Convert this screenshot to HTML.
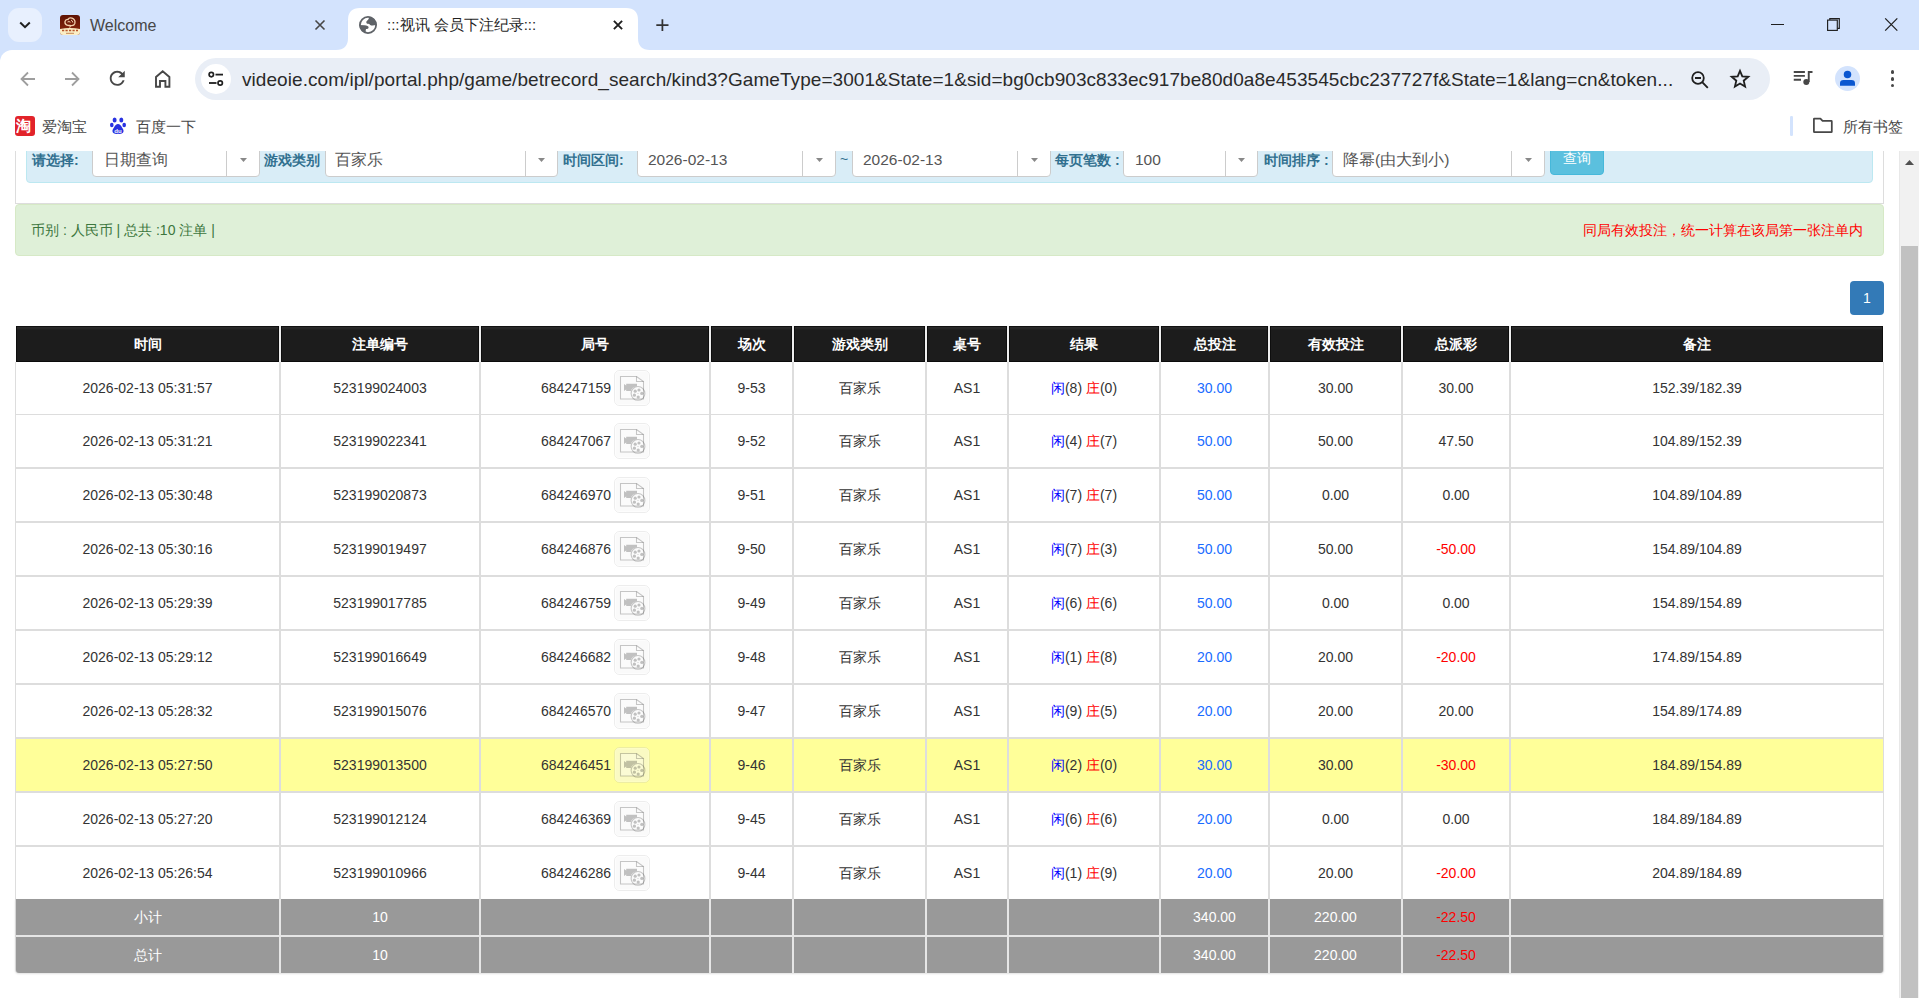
<!DOCTYPE html>
<html><head><meta charset="utf-8"><title>:::视讯 会员下注纪录:::</title><style>
*{margin:0;padding:0;box-sizing:border-box}
html,body{width:1919px;height:998px;overflow:hidden;background:#fff;font-family:"Liberation Sans", sans-serif;position:relative}
.a{position:absolute}
.t{position:absolute;white-space:nowrap;line-height:1}
svg{position:absolute;overflow:visible}
</style></head>
<body>
<div class="a" style="left:0;top:151px;width:1919px;height:847px;overflow:hidden;background:#fff">
<div class="a" style="left:0;top:-151px;width:1919px;height:998px"><div class="a" style="left:15px;top:140px;width:1869px;height:64px;border:1px solid #ddd;border-top:none"></div><div class="a" style="left:26px;top:130px;width:1847px;height:53px;background:#d9edf7;border:1px solid #bce8f1;border-radius:4px"></div><div class="t" style="left:32px;top:153px;font-size:14px;font-weight:bold;color:#31708f">请选择:</div><div class="a" style="left:92px;top:130px;width:168px;height:47px;background:#fff;border:1px solid #ccc;border-radius:4px"></div><div class="a" style="left:226px;top:140px;width:1px;height:36px;background:#ccc"></div><svg style="left:239.5px;top:158px" width="7" height="4" viewBox="0 0 7 4"><path d="M0 0 H7 L3.5 4 Z" fill="#888"/></svg><div class="t" style="left:104px;top:151.5px;font-size:15.5px;color:#555">日期查询</div><div class="t" style="left:264px;top:153px;font-size:14px;font-weight:bold;color:#31708f">游戏类别</div><div class="a" style="left:325px;top:130px;width:233px;height:47px;background:#fff;border:1px solid #ccc;border-radius:4px"></div><div class="a" style="left:525px;top:140px;width:1px;height:36px;background:#ccc"></div><svg style="left:538.0px;top:158px" width="7" height="4" viewBox="0 0 7 4"><path d="M0 0 H7 L3.5 4 Z" fill="#888"/></svg><div class="t" style="left:335px;top:151.5px;font-size:15.5px;color:#555">百家乐</div><div class="t" style="left:563px;top:153px;font-size:14px;font-weight:bold;color:#31708f">时间区间:</div><div class="a" style="left:637px;top:130px;width:199px;height:47px;background:#fff;border:1px solid #ccc;border-radius:4px"></div><div class="a" style="left:802px;top:140px;width:1px;height:36px;background:#ccc"></div><svg style="left:815.5px;top:158px" width="7" height="4" viewBox="0 0 7 4"><path d="M0 0 H7 L3.5 4 Z" fill="#888"/></svg><div class="t" style="left:648px;top:151.5px;font-size:15.5px;color:#555">2026-02-13</div><div class="t" style="left:840px;top:152px;font-size:14px;color:#31708f">~</div><div class="a" style="left:852px;top:130px;width:199px;height:47px;background:#fff;border:1px solid #ccc;border-radius:4px"></div><div class="a" style="left:1017px;top:140px;width:1px;height:36px;background:#ccc"></div><svg style="left:1030.5px;top:158px" width="7" height="4" viewBox="0 0 7 4"><path d="M0 0 H7 L3.5 4 Z" fill="#888"/></svg><div class="t" style="left:863px;top:151.5px;font-size:15.5px;color:#555">2026-02-13</div><div class="t" style="left:1055px;top:153px;font-size:14px;font-weight:bold;color:#31708f">每页笔数 :</div><div class="a" style="left:1123px;top:130px;width:135px;height:47px;background:#fff;border:1px solid #ccc;border-radius:4px"></div><div class="a" style="left:1225px;top:140px;width:1px;height:36px;background:#ccc"></div><svg style="left:1238.0px;top:158px" width="7" height="4" viewBox="0 0 7 4"><path d="M0 0 H7 L3.5 4 Z" fill="#888"/></svg><div class="t" style="left:1135px;top:151.5px;font-size:15.5px;color:#555">100</div><div class="t" style="left:1264px;top:153px;font-size:14px;font-weight:bold;color:#31708f">时间排序 :</div><div class="a" style="left:1332px;top:130px;width:213px;height:47px;background:#fff;border:1px solid #ccc;border-radius:4px"></div><div class="a" style="left:1511px;top:140px;width:1px;height:36px;background:#ccc"></div><svg style="left:1524.5px;top:158px" width="7" height="4" viewBox="0 0 7 4"><path d="M0 0 H7 L3.5 4 Z" fill="#888"/></svg><div class="t" style="left:1343px;top:151.5px;font-size:15.5px;color:#555">降幂(由大到小)</div><div class="a" style="left:1550px;top:130px;width:54px;height:45px;background:#5bc0de;border:1px solid #46b8da;border-radius:4px"></div><div class="t" style="left:1563px;top:151px;font-size:14px;color:#fff">查询</div><div class="a" style="left:15px;top:204px;width:1869px;height:52px;background:#dff0d8;border:1px solid #d6e9c6;border-radius:4px"></div><div class="t" style="left:31px;top:223px;font-size:14px;color:#3c763d">币别 : 人民币 | 总共 :10 注单 |</div><div class="t" style="left:1583px;top:223px;font-size:14px;color:#ff0000">同局有效投注，统一计算在该局第一张注单内</div><div class="a" style="left:1850px;top:281px;width:34px;height:34px;background:#337ab7;border-radius:4px"></div><div class="t" style="left:1850px;top:291px;width:34px;text-align:center;font-size:14px;color:#fff">1</div><div class="a" style="left:16px;top:326px;width:263px;height:36px;background:linear-gradient(#121212 0,#121212 1px,#2a2a2a 1px,#262626 3px,#1c1c1c 4px,#1c1c1c 35px,#0b0b0b 35px);box-shadow:inset 1px 0 0 #0e0e0e,inset -1px 0 0 #0e0e0e"></div><div class="t" style="left:16px;top:337px;width:263px;text-align:center;font-size:14px;font-weight:bold;color:#fff">时间</div><div class="a" style="left:281px;top:326px;width:198px;height:36px;background:linear-gradient(#121212 0,#121212 1px,#2a2a2a 1px,#262626 3px,#1c1c1c 4px,#1c1c1c 35px,#0b0b0b 35px);box-shadow:inset 1px 0 0 #0e0e0e,inset -1px 0 0 #0e0e0e"></div><div class="t" style="left:281px;top:337px;width:198px;text-align:center;font-size:14px;font-weight:bold;color:#fff">注单编号</div><div class="a" style="left:481px;top:326px;width:228px;height:36px;background:linear-gradient(#121212 0,#121212 1px,#2a2a2a 1px,#262626 3px,#1c1c1c 4px,#1c1c1c 35px,#0b0b0b 35px);box-shadow:inset 1px 0 0 #0e0e0e,inset -1px 0 0 #0e0e0e"></div><div class="t" style="left:481px;top:337px;width:228px;text-align:center;font-size:14px;font-weight:bold;color:#fff">局号</div><div class="a" style="left:711px;top:326px;width:81px;height:36px;background:linear-gradient(#121212 0,#121212 1px,#2a2a2a 1px,#262626 3px,#1c1c1c 4px,#1c1c1c 35px,#0b0b0b 35px);box-shadow:inset 1px 0 0 #0e0e0e,inset -1px 0 0 #0e0e0e"></div><div class="t" style="left:711px;top:337px;width:81px;text-align:center;font-size:14px;font-weight:bold;color:#fff">场次</div><div class="a" style="left:794px;top:326px;width:131px;height:36px;background:linear-gradient(#121212 0,#121212 1px,#2a2a2a 1px,#262626 3px,#1c1c1c 4px,#1c1c1c 35px,#0b0b0b 35px);box-shadow:inset 1px 0 0 #0e0e0e,inset -1px 0 0 #0e0e0e"></div><div class="t" style="left:794px;top:337px;width:131px;text-align:center;font-size:14px;font-weight:bold;color:#fff">游戏类别</div><div class="a" style="left:927px;top:326px;width:80px;height:36px;background:linear-gradient(#121212 0,#121212 1px,#2a2a2a 1px,#262626 3px,#1c1c1c 4px,#1c1c1c 35px,#0b0b0b 35px);box-shadow:inset 1px 0 0 #0e0e0e,inset -1px 0 0 #0e0e0e"></div><div class="t" style="left:927px;top:337px;width:80px;text-align:center;font-size:14px;font-weight:bold;color:#fff">桌号</div><div class="a" style="left:1009px;top:326px;width:150px;height:36px;background:linear-gradient(#121212 0,#121212 1px,#2a2a2a 1px,#262626 3px,#1c1c1c 4px,#1c1c1c 35px,#0b0b0b 35px);box-shadow:inset 1px 0 0 #0e0e0e,inset -1px 0 0 #0e0e0e"></div><div class="t" style="left:1009px;top:337px;width:150px;text-align:center;font-size:14px;font-weight:bold;color:#fff">结果</div><div class="a" style="left:1161px;top:326px;width:107px;height:36px;background:linear-gradient(#121212 0,#121212 1px,#2a2a2a 1px,#262626 3px,#1c1c1c 4px,#1c1c1c 35px,#0b0b0b 35px);box-shadow:inset 1px 0 0 #0e0e0e,inset -1px 0 0 #0e0e0e"></div><div class="t" style="left:1161px;top:337px;width:107px;text-align:center;font-size:14px;font-weight:bold;color:#fff">总投注</div><div class="a" style="left:1270px;top:326px;width:131px;height:36px;background:linear-gradient(#121212 0,#121212 1px,#2a2a2a 1px,#262626 3px,#1c1c1c 4px,#1c1c1c 35px,#0b0b0b 35px);box-shadow:inset 1px 0 0 #0e0e0e,inset -1px 0 0 #0e0e0e"></div><div class="t" style="left:1270px;top:337px;width:131px;text-align:center;font-size:14px;font-weight:bold;color:#fff">有效投注</div><div class="a" style="left:1403px;top:326px;width:106px;height:36px;background:linear-gradient(#121212 0,#121212 1px,#2a2a2a 1px,#262626 3px,#1c1c1c 4px,#1c1c1c 35px,#0b0b0b 35px);box-shadow:inset 1px 0 0 #0e0e0e,inset -1px 0 0 #0e0e0e"></div><div class="t" style="left:1403px;top:337px;width:106px;text-align:center;font-size:14px;font-weight:bold;color:#fff">总派彩</div><div class="a" style="left:1511px;top:326px;width:372px;height:36px;background:linear-gradient(#121212 0,#121212 1px,#2a2a2a 1px,#262626 3px,#1c1c1c 4px,#1c1c1c 35px,#0b0b0b 35px);box-shadow:inset 1px 0 0 #0e0e0e,inset -1px 0 0 #0e0e0e"></div><div class="t" style="left:1511px;top:337px;width:372px;text-align:center;font-size:14px;font-weight:bold;color:#fff">备注</div><div class="a" style="left:279px;top:326px;width:2px;height:36px;background:#eeeeee"></div><div class="a" style="left:479px;top:326px;width:2px;height:36px;background:#eeeeee"></div><div class="a" style="left:709px;top:326px;width:2px;height:36px;background:#eeeeee"></div><div class="a" style="left:792px;top:326px;width:2px;height:36px;background:#eeeeee"></div><div class="a" style="left:925px;top:326px;width:2px;height:36px;background:#eeeeee"></div><div class="a" style="left:1007px;top:326px;width:2px;height:36px;background:#eeeeee"></div><div class="a" style="left:1159px;top:326px;width:2px;height:36px;background:#eeeeee"></div><div class="a" style="left:1268px;top:326px;width:2px;height:36px;background:#eeeeee"></div><div class="a" style="left:1401px;top:326px;width:2px;height:36px;background:#eeeeee"></div><div class="a" style="left:1509px;top:326px;width:2px;height:36px;background:#eeeeee"></div><div class="a" style="left:15px;top:362px;width:1869px;height:537px;background:#fff;border-left:1px solid #ddd;border-right:1px solid #ddd"></div><div class="a" style="left:15px;top:414px;width:1869px;height:1px;background:#ddd"></div><div class="t" style="left:16px;top:381px;width:263px;text-align:center;font-size:14px;color:#333">2026-02-13 05:31:57</div><div class="t" style="left:281px;top:381px;width:198px;text-align:center;font-size:14px;color:#333">523199024003</div><div class="t" style="left:481px;top:381px;width:228px;text-align:center;font-size:14px;color:#333">684247159<span style="display:inline-block;width:38px"></span></div><div class="a" style="left:614px;top:370px;width:36px;height:36px"><svg width="36" height="36" viewBox="0 0 36 36" style="position:static;display:block"><defs><mask id="cm"><rect width="36" height="36" fill="#fff"/><circle cx="24" cy="23.4" r="7.5" fill="#000"/></mask></defs><rect x="0.5" y="0.5" width="35" height="35" rx="5" fill="rgba(255,255,255,0.45)" stroke="rgba(0,0,0,0.07)"/><rect x="1.5" y="1.5" width="33" height="33" rx="4" fill="rgba(0,0,0,0.02)"/><path d="M6.5 6.5 H22.5 L29.5 11.5 V29 H6.5 Z" fill="rgba(255,255,255,0.3)" stroke="rgba(0,0,0,0.21)" stroke-width="1.1"/><path d="M22.5 6.5 V11.5 H29.5" fill="none" stroke="rgba(0,0,0,0.21)" stroke-width="1.1"/><path d="M10 14 L12.2 15.6 V13.8 H23 V21 H12.2 V19.4 L10 21 Z" fill="rgba(0,0,0,0.23)" mask="url(#cm)"/><circle cx="24" cy="23.4" r="6.9" fill="none" stroke="rgba(0,0,0,0.21)" stroke-width="1.1"/><g fill="rgba(0,0,0,0.23)"><circle cx="21.2" cy="21.2" r="1.6"/><circle cx="25" cy="20" r="1.6"/><circle cx="27.8" cy="23.4" r="1.6"/><circle cx="20.4" cy="25.2" r="1.6"/><circle cx="24.2" cy="27" r="1.6"/><circle cx="24" cy="23.4" r="0.5"/></g></svg></div><div class="t" style="left:711px;top:381px;width:81px;text-align:center;font-size:14px;color:#333">9-53</div><div class="t" style="left:794px;top:381px;width:131px;text-align:center;font-size:14px;color:#333">百家乐</div><div class="t" style="left:927px;top:381px;width:80px;text-align:center;font-size:14px;color:#333">AS1</div><div class="t" style="left:1009px;top:381px;width:150px;text-align:center;font-size:14px;color:#333"><span style="color:#0000ff">闲</span>(8) <span style="color:#ff0000">庄</span>(0)</div><div class="t" style="left:1161px;top:381px;width:107px;text-align:center;font-size:14px;color:#1a6cff">30.00</div><div class="t" style="left:1270px;top:381px;width:131px;text-align:center;font-size:14px;color:#333">30.00</div><div class="t" style="left:1403px;top:381px;width:106px;text-align:center;font-size:14px;color:#333">30.00</div><div class="t" style="left:1511px;top:381px;width:372px;text-align:center;font-size:14px;color:#333">152.39/182.39</div><div class="a" style="left:15px;top:467px;width:1869px;height:2px;background:#ddd"></div><div class="t" style="left:16px;top:434px;width:263px;text-align:center;font-size:14px;color:#333">2026-02-13 05:31:21</div><div class="t" style="left:281px;top:434px;width:198px;text-align:center;font-size:14px;color:#333">523199022341</div><div class="t" style="left:481px;top:434px;width:228px;text-align:center;font-size:14px;color:#333">684247067<span style="display:inline-block;width:38px"></span></div><div class="a" style="left:614px;top:423px;width:36px;height:36px"><svg width="36" height="36" viewBox="0 0 36 36" style="position:static;display:block"><defs><mask id="cm"><rect width="36" height="36" fill="#fff"/><circle cx="24" cy="23.4" r="7.5" fill="#000"/></mask></defs><rect x="0.5" y="0.5" width="35" height="35" rx="5" fill="rgba(255,255,255,0.45)" stroke="rgba(0,0,0,0.07)"/><rect x="1.5" y="1.5" width="33" height="33" rx="4" fill="rgba(0,0,0,0.02)"/><path d="M6.5 6.5 H22.5 L29.5 11.5 V29 H6.5 Z" fill="rgba(255,255,255,0.3)" stroke="rgba(0,0,0,0.21)" stroke-width="1.1"/><path d="M22.5 6.5 V11.5 H29.5" fill="none" stroke="rgba(0,0,0,0.21)" stroke-width="1.1"/><path d="M10 14 L12.2 15.6 V13.8 H23 V21 H12.2 V19.4 L10 21 Z" fill="rgba(0,0,0,0.23)" mask="url(#cm)"/><circle cx="24" cy="23.4" r="6.9" fill="none" stroke="rgba(0,0,0,0.21)" stroke-width="1.1"/><g fill="rgba(0,0,0,0.23)"><circle cx="21.2" cy="21.2" r="1.6"/><circle cx="25" cy="20" r="1.6"/><circle cx="27.8" cy="23.4" r="1.6"/><circle cx="20.4" cy="25.2" r="1.6"/><circle cx="24.2" cy="27" r="1.6"/><circle cx="24" cy="23.4" r="0.5"/></g></svg></div><div class="t" style="left:711px;top:434px;width:81px;text-align:center;font-size:14px;color:#333">9-52</div><div class="t" style="left:794px;top:434px;width:131px;text-align:center;font-size:14px;color:#333">百家乐</div><div class="t" style="left:927px;top:434px;width:80px;text-align:center;font-size:14px;color:#333">AS1</div><div class="t" style="left:1009px;top:434px;width:150px;text-align:center;font-size:14px;color:#333"><span style="color:#0000ff">闲</span>(4) <span style="color:#ff0000">庄</span>(7)</div><div class="t" style="left:1161px;top:434px;width:107px;text-align:center;font-size:14px;color:#1a6cff">50.00</div><div class="t" style="left:1270px;top:434px;width:131px;text-align:center;font-size:14px;color:#333">50.00</div><div class="t" style="left:1403px;top:434px;width:106px;text-align:center;font-size:14px;color:#333">47.50</div><div class="t" style="left:1511px;top:434px;width:372px;text-align:center;font-size:14px;color:#333">104.89/152.39</div><div class="a" style="left:15px;top:521px;width:1869px;height:2px;background:#ddd"></div><div class="t" style="left:16px;top:488px;width:263px;text-align:center;font-size:14px;color:#333">2026-02-13 05:30:48</div><div class="t" style="left:281px;top:488px;width:198px;text-align:center;font-size:14px;color:#333">523199020873</div><div class="t" style="left:481px;top:488px;width:228px;text-align:center;font-size:14px;color:#333">684246970<span style="display:inline-block;width:38px"></span></div><div class="a" style="left:614px;top:477px;width:36px;height:36px"><svg width="36" height="36" viewBox="0 0 36 36" style="position:static;display:block"><defs><mask id="cm"><rect width="36" height="36" fill="#fff"/><circle cx="24" cy="23.4" r="7.5" fill="#000"/></mask></defs><rect x="0.5" y="0.5" width="35" height="35" rx="5" fill="rgba(255,255,255,0.45)" stroke="rgba(0,0,0,0.07)"/><rect x="1.5" y="1.5" width="33" height="33" rx="4" fill="rgba(0,0,0,0.02)"/><path d="M6.5 6.5 H22.5 L29.5 11.5 V29 H6.5 Z" fill="rgba(255,255,255,0.3)" stroke="rgba(0,0,0,0.21)" stroke-width="1.1"/><path d="M22.5 6.5 V11.5 H29.5" fill="none" stroke="rgba(0,0,0,0.21)" stroke-width="1.1"/><path d="M10 14 L12.2 15.6 V13.8 H23 V21 H12.2 V19.4 L10 21 Z" fill="rgba(0,0,0,0.23)" mask="url(#cm)"/><circle cx="24" cy="23.4" r="6.9" fill="none" stroke="rgba(0,0,0,0.21)" stroke-width="1.1"/><g fill="rgba(0,0,0,0.23)"><circle cx="21.2" cy="21.2" r="1.6"/><circle cx="25" cy="20" r="1.6"/><circle cx="27.8" cy="23.4" r="1.6"/><circle cx="20.4" cy="25.2" r="1.6"/><circle cx="24.2" cy="27" r="1.6"/><circle cx="24" cy="23.4" r="0.5"/></g></svg></div><div class="t" style="left:711px;top:488px;width:81px;text-align:center;font-size:14px;color:#333">9-51</div><div class="t" style="left:794px;top:488px;width:131px;text-align:center;font-size:14px;color:#333">百家乐</div><div class="t" style="left:927px;top:488px;width:80px;text-align:center;font-size:14px;color:#333">AS1</div><div class="t" style="left:1009px;top:488px;width:150px;text-align:center;font-size:14px;color:#333"><span style="color:#0000ff">闲</span>(7) <span style="color:#ff0000">庄</span>(7)</div><div class="t" style="left:1161px;top:488px;width:107px;text-align:center;font-size:14px;color:#1a6cff">50.00</div><div class="t" style="left:1270px;top:488px;width:131px;text-align:center;font-size:14px;color:#333">0.00</div><div class="t" style="left:1403px;top:488px;width:106px;text-align:center;font-size:14px;color:#333">0.00</div><div class="t" style="left:1511px;top:488px;width:372px;text-align:center;font-size:14px;color:#333">104.89/104.89</div><div class="a" style="left:15px;top:575px;width:1869px;height:2px;background:#ddd"></div><div class="t" style="left:16px;top:542px;width:263px;text-align:center;font-size:14px;color:#333">2026-02-13 05:30:16</div><div class="t" style="left:281px;top:542px;width:198px;text-align:center;font-size:14px;color:#333">523199019497</div><div class="t" style="left:481px;top:542px;width:228px;text-align:center;font-size:14px;color:#333">684246876<span style="display:inline-block;width:38px"></span></div><div class="a" style="left:614px;top:531px;width:36px;height:36px"><svg width="36" height="36" viewBox="0 0 36 36" style="position:static;display:block"><defs><mask id="cm"><rect width="36" height="36" fill="#fff"/><circle cx="24" cy="23.4" r="7.5" fill="#000"/></mask></defs><rect x="0.5" y="0.5" width="35" height="35" rx="5" fill="rgba(255,255,255,0.45)" stroke="rgba(0,0,0,0.07)"/><rect x="1.5" y="1.5" width="33" height="33" rx="4" fill="rgba(0,0,0,0.02)"/><path d="M6.5 6.5 H22.5 L29.5 11.5 V29 H6.5 Z" fill="rgba(255,255,255,0.3)" stroke="rgba(0,0,0,0.21)" stroke-width="1.1"/><path d="M22.5 6.5 V11.5 H29.5" fill="none" stroke="rgba(0,0,0,0.21)" stroke-width="1.1"/><path d="M10 14 L12.2 15.6 V13.8 H23 V21 H12.2 V19.4 L10 21 Z" fill="rgba(0,0,0,0.23)" mask="url(#cm)"/><circle cx="24" cy="23.4" r="6.9" fill="none" stroke="rgba(0,0,0,0.21)" stroke-width="1.1"/><g fill="rgba(0,0,0,0.23)"><circle cx="21.2" cy="21.2" r="1.6"/><circle cx="25" cy="20" r="1.6"/><circle cx="27.8" cy="23.4" r="1.6"/><circle cx="20.4" cy="25.2" r="1.6"/><circle cx="24.2" cy="27" r="1.6"/><circle cx="24" cy="23.4" r="0.5"/></g></svg></div><div class="t" style="left:711px;top:542px;width:81px;text-align:center;font-size:14px;color:#333">9-50</div><div class="t" style="left:794px;top:542px;width:131px;text-align:center;font-size:14px;color:#333">百家乐</div><div class="t" style="left:927px;top:542px;width:80px;text-align:center;font-size:14px;color:#333">AS1</div><div class="t" style="left:1009px;top:542px;width:150px;text-align:center;font-size:14px;color:#333"><span style="color:#0000ff">闲</span>(7) <span style="color:#ff0000">庄</span>(3)</div><div class="t" style="left:1161px;top:542px;width:107px;text-align:center;font-size:14px;color:#1a6cff">50.00</div><div class="t" style="left:1270px;top:542px;width:131px;text-align:center;font-size:14px;color:#333">50.00</div><div class="t" style="left:1403px;top:542px;width:106px;text-align:center;font-size:14px;color:#ff0000">-50.00</div><div class="t" style="left:1511px;top:542px;width:372px;text-align:center;font-size:14px;color:#333">154.89/104.89</div><div class="a" style="left:15px;top:629px;width:1869px;height:2px;background:#ddd"></div><div class="t" style="left:16px;top:596px;width:263px;text-align:center;font-size:14px;color:#333">2026-02-13 05:29:39</div><div class="t" style="left:281px;top:596px;width:198px;text-align:center;font-size:14px;color:#333">523199017785</div><div class="t" style="left:481px;top:596px;width:228px;text-align:center;font-size:14px;color:#333">684246759<span style="display:inline-block;width:38px"></span></div><div class="a" style="left:614px;top:585px;width:36px;height:36px"><svg width="36" height="36" viewBox="0 0 36 36" style="position:static;display:block"><defs><mask id="cm"><rect width="36" height="36" fill="#fff"/><circle cx="24" cy="23.4" r="7.5" fill="#000"/></mask></defs><rect x="0.5" y="0.5" width="35" height="35" rx="5" fill="rgba(255,255,255,0.45)" stroke="rgba(0,0,0,0.07)"/><rect x="1.5" y="1.5" width="33" height="33" rx="4" fill="rgba(0,0,0,0.02)"/><path d="M6.5 6.5 H22.5 L29.5 11.5 V29 H6.5 Z" fill="rgba(255,255,255,0.3)" stroke="rgba(0,0,0,0.21)" stroke-width="1.1"/><path d="M22.5 6.5 V11.5 H29.5" fill="none" stroke="rgba(0,0,0,0.21)" stroke-width="1.1"/><path d="M10 14 L12.2 15.6 V13.8 H23 V21 H12.2 V19.4 L10 21 Z" fill="rgba(0,0,0,0.23)" mask="url(#cm)"/><circle cx="24" cy="23.4" r="6.9" fill="none" stroke="rgba(0,0,0,0.21)" stroke-width="1.1"/><g fill="rgba(0,0,0,0.23)"><circle cx="21.2" cy="21.2" r="1.6"/><circle cx="25" cy="20" r="1.6"/><circle cx="27.8" cy="23.4" r="1.6"/><circle cx="20.4" cy="25.2" r="1.6"/><circle cx="24.2" cy="27" r="1.6"/><circle cx="24" cy="23.4" r="0.5"/></g></svg></div><div class="t" style="left:711px;top:596px;width:81px;text-align:center;font-size:14px;color:#333">9-49</div><div class="t" style="left:794px;top:596px;width:131px;text-align:center;font-size:14px;color:#333">百家乐</div><div class="t" style="left:927px;top:596px;width:80px;text-align:center;font-size:14px;color:#333">AS1</div><div class="t" style="left:1009px;top:596px;width:150px;text-align:center;font-size:14px;color:#333"><span style="color:#0000ff">闲</span>(6) <span style="color:#ff0000">庄</span>(6)</div><div class="t" style="left:1161px;top:596px;width:107px;text-align:center;font-size:14px;color:#1a6cff">50.00</div><div class="t" style="left:1270px;top:596px;width:131px;text-align:center;font-size:14px;color:#333">0.00</div><div class="t" style="left:1403px;top:596px;width:106px;text-align:center;font-size:14px;color:#333">0.00</div><div class="t" style="left:1511px;top:596px;width:372px;text-align:center;font-size:14px;color:#333">154.89/154.89</div><div class="a" style="left:15px;top:683px;width:1869px;height:2px;background:#ddd"></div><div class="t" style="left:16px;top:650px;width:263px;text-align:center;font-size:14px;color:#333">2026-02-13 05:29:12</div><div class="t" style="left:281px;top:650px;width:198px;text-align:center;font-size:14px;color:#333">523199016649</div><div class="t" style="left:481px;top:650px;width:228px;text-align:center;font-size:14px;color:#333">684246682<span style="display:inline-block;width:38px"></span></div><div class="a" style="left:614px;top:639px;width:36px;height:36px"><svg width="36" height="36" viewBox="0 0 36 36" style="position:static;display:block"><defs><mask id="cm"><rect width="36" height="36" fill="#fff"/><circle cx="24" cy="23.4" r="7.5" fill="#000"/></mask></defs><rect x="0.5" y="0.5" width="35" height="35" rx="5" fill="rgba(255,255,255,0.45)" stroke="rgba(0,0,0,0.07)"/><rect x="1.5" y="1.5" width="33" height="33" rx="4" fill="rgba(0,0,0,0.02)"/><path d="M6.5 6.5 H22.5 L29.5 11.5 V29 H6.5 Z" fill="rgba(255,255,255,0.3)" stroke="rgba(0,0,0,0.21)" stroke-width="1.1"/><path d="M22.5 6.5 V11.5 H29.5" fill="none" stroke="rgba(0,0,0,0.21)" stroke-width="1.1"/><path d="M10 14 L12.2 15.6 V13.8 H23 V21 H12.2 V19.4 L10 21 Z" fill="rgba(0,0,0,0.23)" mask="url(#cm)"/><circle cx="24" cy="23.4" r="6.9" fill="none" stroke="rgba(0,0,0,0.21)" stroke-width="1.1"/><g fill="rgba(0,0,0,0.23)"><circle cx="21.2" cy="21.2" r="1.6"/><circle cx="25" cy="20" r="1.6"/><circle cx="27.8" cy="23.4" r="1.6"/><circle cx="20.4" cy="25.2" r="1.6"/><circle cx="24.2" cy="27" r="1.6"/><circle cx="24" cy="23.4" r="0.5"/></g></svg></div><div class="t" style="left:711px;top:650px;width:81px;text-align:center;font-size:14px;color:#333">9-48</div><div class="t" style="left:794px;top:650px;width:131px;text-align:center;font-size:14px;color:#333">百家乐</div><div class="t" style="left:927px;top:650px;width:80px;text-align:center;font-size:14px;color:#333">AS1</div><div class="t" style="left:1009px;top:650px;width:150px;text-align:center;font-size:14px;color:#333"><span style="color:#0000ff">闲</span>(1) <span style="color:#ff0000">庄</span>(8)</div><div class="t" style="left:1161px;top:650px;width:107px;text-align:center;font-size:14px;color:#1a6cff">20.00</div><div class="t" style="left:1270px;top:650px;width:131px;text-align:center;font-size:14px;color:#333">20.00</div><div class="t" style="left:1403px;top:650px;width:106px;text-align:center;font-size:14px;color:#ff0000">-20.00</div><div class="t" style="left:1511px;top:650px;width:372px;text-align:center;font-size:14px;color:#333">174.89/154.89</div><div class="a" style="left:15px;top:737px;width:1869px;height:2px;background:#ddd"></div><div class="t" style="left:16px;top:704px;width:263px;text-align:center;font-size:14px;color:#333">2026-02-13 05:28:32</div><div class="t" style="left:281px;top:704px;width:198px;text-align:center;font-size:14px;color:#333">523199015076</div><div class="t" style="left:481px;top:704px;width:228px;text-align:center;font-size:14px;color:#333">684246570<span style="display:inline-block;width:38px"></span></div><div class="a" style="left:614px;top:693px;width:36px;height:36px"><svg width="36" height="36" viewBox="0 0 36 36" style="position:static;display:block"><defs><mask id="cm"><rect width="36" height="36" fill="#fff"/><circle cx="24" cy="23.4" r="7.5" fill="#000"/></mask></defs><rect x="0.5" y="0.5" width="35" height="35" rx="5" fill="rgba(255,255,255,0.45)" stroke="rgba(0,0,0,0.07)"/><rect x="1.5" y="1.5" width="33" height="33" rx="4" fill="rgba(0,0,0,0.02)"/><path d="M6.5 6.5 H22.5 L29.5 11.5 V29 H6.5 Z" fill="rgba(255,255,255,0.3)" stroke="rgba(0,0,0,0.21)" stroke-width="1.1"/><path d="M22.5 6.5 V11.5 H29.5" fill="none" stroke="rgba(0,0,0,0.21)" stroke-width="1.1"/><path d="M10 14 L12.2 15.6 V13.8 H23 V21 H12.2 V19.4 L10 21 Z" fill="rgba(0,0,0,0.23)" mask="url(#cm)"/><circle cx="24" cy="23.4" r="6.9" fill="none" stroke="rgba(0,0,0,0.21)" stroke-width="1.1"/><g fill="rgba(0,0,0,0.23)"><circle cx="21.2" cy="21.2" r="1.6"/><circle cx="25" cy="20" r="1.6"/><circle cx="27.8" cy="23.4" r="1.6"/><circle cx="20.4" cy="25.2" r="1.6"/><circle cx="24.2" cy="27" r="1.6"/><circle cx="24" cy="23.4" r="0.5"/></g></svg></div><div class="t" style="left:711px;top:704px;width:81px;text-align:center;font-size:14px;color:#333">9-47</div><div class="t" style="left:794px;top:704px;width:131px;text-align:center;font-size:14px;color:#333">百家乐</div><div class="t" style="left:927px;top:704px;width:80px;text-align:center;font-size:14px;color:#333">AS1</div><div class="t" style="left:1009px;top:704px;width:150px;text-align:center;font-size:14px;color:#333"><span style="color:#0000ff">闲</span>(9) <span style="color:#ff0000">庄</span>(5)</div><div class="t" style="left:1161px;top:704px;width:107px;text-align:center;font-size:14px;color:#1a6cff">20.00</div><div class="t" style="left:1270px;top:704px;width:131px;text-align:center;font-size:14px;color:#333">20.00</div><div class="t" style="left:1403px;top:704px;width:106px;text-align:center;font-size:14px;color:#333">20.00</div><div class="t" style="left:1511px;top:704px;width:372px;text-align:center;font-size:14px;color:#333">154.89/174.89</div><div class="a" style="left:16px;top:739px;width:1867px;height:52px;background:#ffff99"></div><div class="a" style="left:15px;top:791px;width:1869px;height:2px;background:#ddd"></div><div class="t" style="left:16px;top:758px;width:263px;text-align:center;font-size:14px;color:#333">2026-02-13 05:27:50</div><div class="t" style="left:281px;top:758px;width:198px;text-align:center;font-size:14px;color:#333">523199013500</div><div class="t" style="left:481px;top:758px;width:228px;text-align:center;font-size:14px;color:#333">684246451<span style="display:inline-block;width:38px"></span></div><div class="a" style="left:614px;top:747px;width:36px;height:36px"><svg width="36" height="36" viewBox="0 0 36 36" style="position:static;display:block"><defs><mask id="cm"><rect width="36" height="36" fill="#fff"/><circle cx="24" cy="23.4" r="7.5" fill="#000"/></mask></defs><rect x="0.5" y="0.5" width="35" height="35" rx="5" fill="rgba(255,255,255,0.45)" stroke="rgba(0,0,0,0.07)"/><rect x="1.5" y="1.5" width="33" height="33" rx="4" fill="rgba(0,0,0,0.02)"/><path d="M6.5 6.5 H22.5 L29.5 11.5 V29 H6.5 Z" fill="rgba(255,255,255,0.3)" stroke="rgba(0,0,0,0.21)" stroke-width="1.1"/><path d="M22.5 6.5 V11.5 H29.5" fill="none" stroke="rgba(0,0,0,0.21)" stroke-width="1.1"/><path d="M10 14 L12.2 15.6 V13.8 H23 V21 H12.2 V19.4 L10 21 Z" fill="rgba(0,0,0,0.23)" mask="url(#cm)"/><circle cx="24" cy="23.4" r="6.9" fill="none" stroke="rgba(0,0,0,0.21)" stroke-width="1.1"/><g fill="rgba(0,0,0,0.23)"><circle cx="21.2" cy="21.2" r="1.6"/><circle cx="25" cy="20" r="1.6"/><circle cx="27.8" cy="23.4" r="1.6"/><circle cx="20.4" cy="25.2" r="1.6"/><circle cx="24.2" cy="27" r="1.6"/><circle cx="24" cy="23.4" r="0.5"/></g></svg></div><div class="t" style="left:711px;top:758px;width:81px;text-align:center;font-size:14px;color:#333">9-46</div><div class="t" style="left:794px;top:758px;width:131px;text-align:center;font-size:14px;color:#333">百家乐</div><div class="t" style="left:927px;top:758px;width:80px;text-align:center;font-size:14px;color:#333">AS1</div><div class="t" style="left:1009px;top:758px;width:150px;text-align:center;font-size:14px;color:#333"><span style="color:#0000ff">闲</span>(2) <span style="color:#ff0000">庄</span>(0)</div><div class="t" style="left:1161px;top:758px;width:107px;text-align:center;font-size:14px;color:#1a6cff">30.00</div><div class="t" style="left:1270px;top:758px;width:131px;text-align:center;font-size:14px;color:#333">30.00</div><div class="t" style="left:1403px;top:758px;width:106px;text-align:center;font-size:14px;color:#ff0000">-30.00</div><div class="t" style="left:1511px;top:758px;width:372px;text-align:center;font-size:14px;color:#333">184.89/154.89</div><div class="a" style="left:15px;top:845px;width:1869px;height:2px;background:#ddd"></div><div class="t" style="left:16px;top:812px;width:263px;text-align:center;font-size:14px;color:#333">2026-02-13 05:27:20</div><div class="t" style="left:281px;top:812px;width:198px;text-align:center;font-size:14px;color:#333">523199012124</div><div class="t" style="left:481px;top:812px;width:228px;text-align:center;font-size:14px;color:#333">684246369<span style="display:inline-block;width:38px"></span></div><div class="a" style="left:614px;top:801px;width:36px;height:36px"><svg width="36" height="36" viewBox="0 0 36 36" style="position:static;display:block"><defs><mask id="cm"><rect width="36" height="36" fill="#fff"/><circle cx="24" cy="23.4" r="7.5" fill="#000"/></mask></defs><rect x="0.5" y="0.5" width="35" height="35" rx="5" fill="rgba(255,255,255,0.45)" stroke="rgba(0,0,0,0.07)"/><rect x="1.5" y="1.5" width="33" height="33" rx="4" fill="rgba(0,0,0,0.02)"/><path d="M6.5 6.5 H22.5 L29.5 11.5 V29 H6.5 Z" fill="rgba(255,255,255,0.3)" stroke="rgba(0,0,0,0.21)" stroke-width="1.1"/><path d="M22.5 6.5 V11.5 H29.5" fill="none" stroke="rgba(0,0,0,0.21)" stroke-width="1.1"/><path d="M10 14 L12.2 15.6 V13.8 H23 V21 H12.2 V19.4 L10 21 Z" fill="rgba(0,0,0,0.23)" mask="url(#cm)"/><circle cx="24" cy="23.4" r="6.9" fill="none" stroke="rgba(0,0,0,0.21)" stroke-width="1.1"/><g fill="rgba(0,0,0,0.23)"><circle cx="21.2" cy="21.2" r="1.6"/><circle cx="25" cy="20" r="1.6"/><circle cx="27.8" cy="23.4" r="1.6"/><circle cx="20.4" cy="25.2" r="1.6"/><circle cx="24.2" cy="27" r="1.6"/><circle cx="24" cy="23.4" r="0.5"/></g></svg></div><div class="t" style="left:711px;top:812px;width:81px;text-align:center;font-size:14px;color:#333">9-45</div><div class="t" style="left:794px;top:812px;width:131px;text-align:center;font-size:14px;color:#333">百家乐</div><div class="t" style="left:927px;top:812px;width:80px;text-align:center;font-size:14px;color:#333">AS1</div><div class="t" style="left:1009px;top:812px;width:150px;text-align:center;font-size:14px;color:#333"><span style="color:#0000ff">闲</span>(6) <span style="color:#ff0000">庄</span>(6)</div><div class="t" style="left:1161px;top:812px;width:107px;text-align:center;font-size:14px;color:#1a6cff">20.00</div><div class="t" style="left:1270px;top:812px;width:131px;text-align:center;font-size:14px;color:#333">0.00</div><div class="t" style="left:1403px;top:812px;width:106px;text-align:center;font-size:14px;color:#333">0.00</div><div class="t" style="left:1511px;top:812px;width:372px;text-align:center;font-size:14px;color:#333">184.89/184.89</div><div class="t" style="left:16px;top:866px;width:263px;text-align:center;font-size:14px;color:#333">2026-02-13 05:26:54</div><div class="t" style="left:281px;top:866px;width:198px;text-align:center;font-size:14px;color:#333">523199010966</div><div class="t" style="left:481px;top:866px;width:228px;text-align:center;font-size:14px;color:#333">684246286<span style="display:inline-block;width:38px"></span></div><div class="a" style="left:614px;top:855px;width:36px;height:36px"><svg width="36" height="36" viewBox="0 0 36 36" style="position:static;display:block"><defs><mask id="cm"><rect width="36" height="36" fill="#fff"/><circle cx="24" cy="23.4" r="7.5" fill="#000"/></mask></defs><rect x="0.5" y="0.5" width="35" height="35" rx="5" fill="rgba(255,255,255,0.45)" stroke="rgba(0,0,0,0.07)"/><rect x="1.5" y="1.5" width="33" height="33" rx="4" fill="rgba(0,0,0,0.02)"/><path d="M6.5 6.5 H22.5 L29.5 11.5 V29 H6.5 Z" fill="rgba(255,255,255,0.3)" stroke="rgba(0,0,0,0.21)" stroke-width="1.1"/><path d="M22.5 6.5 V11.5 H29.5" fill="none" stroke="rgba(0,0,0,0.21)" stroke-width="1.1"/><path d="M10 14 L12.2 15.6 V13.8 H23 V21 H12.2 V19.4 L10 21 Z" fill="rgba(0,0,0,0.23)" mask="url(#cm)"/><circle cx="24" cy="23.4" r="6.9" fill="none" stroke="rgba(0,0,0,0.21)" stroke-width="1.1"/><g fill="rgba(0,0,0,0.23)"><circle cx="21.2" cy="21.2" r="1.6"/><circle cx="25" cy="20" r="1.6"/><circle cx="27.8" cy="23.4" r="1.6"/><circle cx="20.4" cy="25.2" r="1.6"/><circle cx="24.2" cy="27" r="1.6"/><circle cx="24" cy="23.4" r="0.5"/></g></svg></div><div class="t" style="left:711px;top:866px;width:81px;text-align:center;font-size:14px;color:#333">9-44</div><div class="t" style="left:794px;top:866px;width:131px;text-align:center;font-size:14px;color:#333">百家乐</div><div class="t" style="left:927px;top:866px;width:80px;text-align:center;font-size:14px;color:#333">AS1</div><div class="t" style="left:1009px;top:866px;width:150px;text-align:center;font-size:14px;color:#333"><span style="color:#0000ff">闲</span>(1) <span style="color:#ff0000">庄</span>(9)</div><div class="t" style="left:1161px;top:866px;width:107px;text-align:center;font-size:14px;color:#1a6cff">20.00</div><div class="t" style="left:1270px;top:866px;width:131px;text-align:center;font-size:14px;color:#333">20.00</div><div class="t" style="left:1403px;top:866px;width:106px;text-align:center;font-size:14px;color:#ff0000">-20.00</div><div class="t" style="left:1511px;top:866px;width:372px;text-align:center;font-size:14px;color:#333">204.89/184.89</div><div class="a" style="left:279px;top:362px;width:2px;height:537px;background:#ddd"></div><div class="a" style="left:479px;top:362px;width:2px;height:537px;background:#ddd"></div><div class="a" style="left:709px;top:362px;width:2px;height:537px;background:#ddd"></div><div class="a" style="left:792px;top:362px;width:2px;height:537px;background:#ddd"></div><div class="a" style="left:925px;top:362px;width:2px;height:537px;background:#ddd"></div><div class="a" style="left:1007px;top:362px;width:2px;height:537px;background:#ddd"></div><div class="a" style="left:1159px;top:362px;width:2px;height:537px;background:#ddd"></div><div class="a" style="left:1268px;top:362px;width:2px;height:537px;background:#ddd"></div><div class="a" style="left:1401px;top:362px;width:2px;height:537px;background:#ddd"></div><div class="a" style="left:1509px;top:362px;width:2px;height:537px;background:#ddd"></div><div class="a" style="left:15px;top:899px;width:1869px;height:74px;background:#e6e6e6;border-left:1px solid #d6d6d6;border-right:1px solid #d6d6d6;border-bottom-left-radius:4px;border-bottom-right-radius:4px;box-shadow:0 1px 2px rgba(0,0,0,0.12)"></div><div class="a" style="left:16px;top:899px;width:263px;height:36px;background:#999;"></div><div class="a" style="left:281px;top:899px;width:198px;height:36px;background:#999;"></div><div class="a" style="left:481px;top:899px;width:228px;height:36px;background:#999;"></div><div class="a" style="left:711px;top:899px;width:81px;height:36px;background:#999;"></div><div class="a" style="left:794px;top:899px;width:131px;height:36px;background:#999;"></div><div class="a" style="left:927px;top:899px;width:80px;height:36px;background:#999;"></div><div class="a" style="left:1009px;top:899px;width:150px;height:36px;background:#999;"></div><div class="a" style="left:1161px;top:899px;width:107px;height:36px;background:#999;"></div><div class="a" style="left:1270px;top:899px;width:131px;height:36px;background:#999;"></div><div class="a" style="left:1403px;top:899px;width:106px;height:36px;background:#999;"></div><div class="a" style="left:1511px;top:899px;width:372px;height:36px;background:#999;"></div><div class="t" style="left:16px;top:910px;width:263px;text-align:center;font-size:14px;color:#fff">小计</div><div class="t" style="left:281px;top:910px;width:198px;text-align:center;font-size:14px;color:#fff">10</div><div class="t" style="left:1161px;top:910px;width:107px;text-align:center;font-size:14px;color:#fff">340.00</div><div class="t" style="left:1270px;top:910px;width:131px;text-align:center;font-size:14px;color:#fff">220.00</div><div class="t" style="left:1403px;top:910px;width:106px;text-align:center;font-size:14px;color:#ff0000">-22.50</div><div class="a" style="left:16px;top:937px;width:263px;height:36px;background:#999;border-bottom-left-radius:3px;"></div><div class="a" style="left:281px;top:937px;width:198px;height:36px;background:#999;"></div><div class="a" style="left:481px;top:937px;width:228px;height:36px;background:#999;"></div><div class="a" style="left:711px;top:937px;width:81px;height:36px;background:#999;"></div><div class="a" style="left:794px;top:937px;width:131px;height:36px;background:#999;"></div><div class="a" style="left:927px;top:937px;width:80px;height:36px;background:#999;"></div><div class="a" style="left:1009px;top:937px;width:150px;height:36px;background:#999;"></div><div class="a" style="left:1161px;top:937px;width:107px;height:36px;background:#999;"></div><div class="a" style="left:1270px;top:937px;width:131px;height:36px;background:#999;"></div><div class="a" style="left:1403px;top:937px;width:106px;height:36px;background:#999;"></div><div class="a" style="left:1511px;top:937px;width:372px;height:36px;background:#999;border-bottom-right-radius:3px;"></div><div class="t" style="left:16px;top:948px;width:263px;text-align:center;font-size:14px;color:#fff">总计</div><div class="t" style="left:281px;top:948px;width:198px;text-align:center;font-size:14px;color:#fff">10</div><div class="t" style="left:1161px;top:948px;width:107px;text-align:center;font-size:14px;color:#fff">340.00</div><div class="t" style="left:1270px;top:948px;width:131px;text-align:center;font-size:14px;color:#fff">220.00</div><div class="t" style="left:1403px;top:948px;width:106px;text-align:center;font-size:14px;color:#ff0000">-22.50</div><div class="a" style="left:1899px;top:151px;width:20px;height:847px;background:#f1f1f1;border-left:1px solid #e8e8e8"></div><svg style="left:1905px;top:160px" width="9" height="5" viewBox="0 0 9 5"><path d="M0 5 H9 L4.5 0 Z" fill="#505050"/></svg><div class="a" style="left:1901px;top:246px;width:17px;height:760px;background:#c1c1c1"></div></div>
</div>
<div class="a" style="left:0;top:0;width:1919px;height:50px;background:#d3e3fd"></div><div class="a" style="left:8px;top:8px;width:34px;height:34px;border-radius:11px;background:#e8f0fe"></div><svg style="left:19px;top:21px" width="12" height="8" viewBox="0 0 12 8"><path d="M1.2 1.5 L6 6.2 L10.8 1.5" fill="none" stroke="#1f1f1f" stroke-width="2"/></svg><svg style="left:60px;top:15px" width="20" height="20" viewBox="0 0 20 20"><defs><linearGradient id="fg" x1="0" y1="0" x2="0" y2="1"><stop offset="0" stop-color="#5e1203"/><stop offset="1" stop-color="#8e2b0f"/></linearGradient><clipPath id="fc"><rect x="0" y="0" width="20" height="20" rx="3"/></clipPath></defs><g clip-path="url(#fc)"><rect width="20" height="20" fill="url(#fg)"/><path d="M0 14 Q10 12 20 14 V20 H0 Z" fill="#fbeec6"/><path d="M2 15.5 H18" stroke="#b5542c" stroke-width="1.6" stroke-dasharray="2.2 1.3"/><path d="M6 18.3 H14" stroke="#c07a4a" stroke-width="0.9"/><path d="M9.5 12.5 L10.5 11 M8 10.5 Q4.5 9.5 5 6.5 Q5.6 4.2 8 4.5 Q9.2 2 12 3.2 Q15.8 4.8 14.8 8.5 Q14 11 11 10.6 Q9.5 10.3 8 10.5 Z" fill="none" stroke="#f1cfac" stroke-width="1.3"/><path d="M7.5 7 Q9 6 10.5 7.2 M11 5 Q12.5 5.5 12.8 7.5" fill="none" stroke="#f1cfac" stroke-width="1"/></g></svg><div class="t" style="left:90px;top:18px;font-size:16px;color:#474747">Welcome</div><svg style="left:315px;top:20px" width="10" height="10" viewBox="0 0 10 10"><path d="M0.5 0.5 L9.5 9.5 M9.5 0.5 L0.5 9.5" stroke="#474747" stroke-width="1.6"/></svg><svg style="left:336px;top:8px" width="314" height="42" viewBox="0 0 314 42"><path d="M0 42 Q12 42 12 30 L12 12 Q12 0 24 0 L290 0 Q302 0 302 12 L302 30 Q302 42 314 42 Z" fill="#fff"/></svg><svg style="left:359px;top:16px" width="18" height="18" viewBox="0 0 18 18"><defs><clipPath id="gc"><circle cx="9" cy="9" r="8.5"/></clipPath></defs><circle cx="9" cy="9" r="8.1" fill="#fff" stroke="#5f6368" stroke-width="1.8"/><g clip-path="url(#gc)" fill="#5f6368"><path d="M10.3 0 C10 2.2 9.6 3.6 8.3 4.6 C7 5.6 6.9 7.3 8.4 7.8 C9.8 8.1 10.6 8.1 11.3 8.9 C12.1 9.7 13.5 9.7 15 9.2 L18 9 L18 0 Z"/><path d="M0 9 L5.5 9.2 C8 9.4 9.6 10 9.6 11.4 C9.6 12.6 8.2 12.8 7.2 13.1 C6.6 13.4 6.7 14.6 6.8 18 L0 18 Z"/></g></svg><div class="t" style="left:387px;top:17px;font-size:15px;color:#1f1f1f">:::视讯 会员下注纪录:::</div><svg style="left:612.5px;top:20px" width="10" height="10" viewBox="0 0 10 10"><path d="M0.9 0.9 L9.1 9.1 M9.1 0.9 L0.9 9.1" stroke="#1f1f1f" stroke-width="1.9"/></svg><svg style="left:656px;top:18.8px" width="12.8" height="12.2" viewBox="0 0 12.8 12.2"><path d="M6.4 0.3 V11.9 M0.3 6.1 H12.5" stroke="#333" stroke-width="1.75"/></svg><div class="a" style="left:1771px;top:24px;width:13px;height:1px;background:#1f1f1f"></div><svg style="left:1820px;top:10px" width="30" height="30" viewBox="1820 10 30 30"><rect x="1827.6" y="20.1" width="9.7" height="10.3" fill="none" stroke="#1f1f1f" stroke-width="1.15"/><path d="M1829.8 20.1 V18.6 H1839.3 V28.3 H1837.3" fill="none" stroke="#1f1f1f" stroke-width="1.15"/></svg><svg style="left:1880px;top:14px" width="22" height="22" viewBox="1880 14 22 22"><path d="M1885.2 18.4 L1897.3 30.6 M1897.3 18.4 L1885.2 30.6" stroke="#1f1f1f" stroke-width="1.25"/></svg><div class="a" style="left:0;top:50px;width:1919px;height:101px;background:#fff;border-top-left-radius:12px"></div><div class="a" style="left:0;top:50px;width:14px;height:14px;background:#d3e3fd"></div><div class="a" style="left:0;top:50px;width:1919px;height:101px;background:#fff;border-top-left-radius:12px;border-top-right-radius:12px"></div><svg style="left:20px;top:71px" width="16" height="16" viewBox="0 0 16 16"><path d="M15 8 H1.8 M8 1.5 L1.5 8 L8 14.5" fill="none" stroke="#9e9e9e" stroke-width="1.8"/></svg><svg style="left:64px;top:71px" width="16" height="16" viewBox="0 0 16 16"><path d="M1 8 H14.2 M8 1.5 L14.5 8 L8 14.5" fill="none" stroke="#9e9e9e" stroke-width="1.8"/></svg><svg style="left:106.25px;top:67.15px" width="22.5" height="22.5" viewBox="0 0 24 24"><path d="M17.65 6.35C16.2 4.9 14.21 4 12 4c-4.42 0-7.99 3.58-7.99 8s3.57 8 7.99 8c3.73 0 6.84-2.55 7.73-6h-2.08c-.82 2.33-3.04 4-5.65 4-3.31 0-6-2.69-6-6s2.69-6 6-6c1.66 0 3.14.69 4.22 1.78L13 11h7V4l-2.35 2.35z" fill="#474747"/></svg><svg style="left:155px;top:70px" width="16" height="18" viewBox="0 0 16 18"><path d="M1 16.8 V7 L7.7 1.3 L14.4 7 V16.8 H10.4 V11 H5 V16.8 Z" fill="none" stroke="#474747" stroke-width="1.9" stroke-linejoin="miter"/></svg><div class="a" style="left:195px;top:58px;width:1575px;height:42px;border-radius:21px;background:#e9eef6"></div><div class="a" style="left:201px;top:64px;width:30px;height:30px;border-radius:15px;background:#fff"></div><svg style="left:208px;top:71px" width="16" height="16" viewBox="0 0 16 16"><circle cx="3.3" cy="3.6" r="2.2" fill="none" stroke="#1f1f1f" stroke-width="1.7"/><path d="M7.5 3.6 H15" stroke="#1f1f1f" stroke-width="1.8"/><circle cx="12.2" cy="12" r="2.2" fill="none" stroke="#1f1f1f" stroke-width="1.7"/><path d="M1 12 H8.5" stroke="#1f1f1f" stroke-width="1.8"/></svg><div class="t" style="left:242px;top:70px;font-size:19px;color:#2a2a2a;letter-spacing:0.06px">videoie.com/ipl/portal.php/game/betrecord_search/kind3?GameType=3001&amp;State=1&amp;sid=bg0cb903c833ec917be80d0a8e453545cbc237727f&amp;State=1&amp;lang=cn&amp;token...</div><svg style="left:1691px;top:71px" width="18" height="18" viewBox="0 0 18 18"><circle cx="7" cy="7" r="5.8" fill="none" stroke="#1f1f1f" stroke-width="1.8"/><path d="M4 7 H10 M11.2 11.2 L16.8 16.8" stroke="#1f1f1f" stroke-width="1.9"/></svg><svg style="left:1730px;top:69px" width="20" height="20" viewBox="0 0 20 20"><path d="M10 1.8 L12.3 7.3 L18.3 7.8 L13.7 11.7 L15.1 17.6 L10 14.5 L4.9 17.6 L6.3 11.7 L1.7 7.8 L7.7 7.3 Z" fill="none" stroke="#1f1f1f" stroke-width="1.8" stroke-linejoin="miter"/></svg><svg style="left:1793px;top:70px" width="20" height="16" viewBox="0 0 20 16"><path d="M0.75 2 H11.9 M0.75 5.9 H11.9 M0.75 9.8 H8" stroke="#474747" stroke-width="1.9"/><path d="M15.75 12 V2 H19.5" fill="none" stroke="#474747" stroke-width="1.9"/><circle cx="13.3" cy="12" r="3" fill="#474747"/></svg><div class="a" style="left:1835px;top:66px;width:25px;height:25px;border-radius:50%;background:#d3e3fd"></div><svg style="left:1839px;top:70px" width="17" height="17" viewBox="0 0 17 17"><circle cx="8.5" cy="4.5" r="3.75" fill="#0b57d0"/><path d="M1 15.75 V13.2 Q1 10 4.6 10 H12.4 Q16 10 16 13.2 V15.75 Z" fill="#0b57d0"/></svg><div class="a" style="left:1890.6px;top:70.2px;width:3.6px;height:3.6px;border-radius:50%;background:#474747"></div><div class="a" style="left:1890.6px;top:77.1px;width:3.6px;height:3.6px;border-radius:50%;background:#474747"></div><div class="a" style="left:1890.6px;top:83.8px;width:3.6px;height:3.6px;border-radius:50%;background:#474747"></div><div class="a" style="left:15px;top:116px;width:20px;height:20px;border-radius:3px;background:#e2232a"></div><div class="t" style="left:16px;top:118px;font-size:15px;font-weight:bold;color:#fff">淘</div><div class="t" style="left:42px;top:119px;font-size:15px;color:#474747">爱淘宝</div><svg style="left:110px;top:117px" width="16" height="18" viewBox="0 0 16 18"><ellipse cx="4.6" cy="3" rx="2" ry="2.6" fill="#2932e1"/><ellipse cx="11.3" cy="3" rx="2" ry="2.6" fill="#2932e1"/><ellipse cx="1.8" cy="8" rx="1.8" ry="2.3" fill="#2932e1"/><ellipse cx="14.2" cy="8" rx="1.8" ry="2.3" fill="#2932e1"/><path d="M8 7 Q5.5 7 4 10.5 Q1.5 13.5 3 15.8 Q4.2 17.3 8 16.8 Q11.8 17.3 13 15.8 Q14.5 13.5 12 10.5 Q10.5 7 8 7 Z" fill="#2932e1"/><text x="8" y="15.6" font-size="6" font-family="Liberation Sans" font-weight="bold" fill="#fff" text-anchor="middle">du</text></svg><div class="t" style="left:136px;top:119px;font-size:15px;color:#474747">百度一下</div><div class="a" style="left:1790px;top:116px;width:2.5px;height:19.5px;border-radius:1.2px;background:#d3e3fd"></div><svg style="left:1812px;top:117px" width="22" height="17" viewBox="0 0 22 17"><path d="M1.9 2 Q1.9 1.6 2.3 1.6 L8.4 1.6 L10.6 3.9 L19.3 3.9 Q19.8 3.9 19.8 4.4 L19.8 14.7 Q19.8 15.2 19.3 15.2 L2.4 15.2 Q1.9 15.2 1.9 14.7 Z" fill="none" stroke="#474747" stroke-width="1.75" stroke-linejoin="round"/></svg><div class="t" style="left:1843px;top:119px;font-size:15px;color:#474747">所有书签</div>
</body></html>
